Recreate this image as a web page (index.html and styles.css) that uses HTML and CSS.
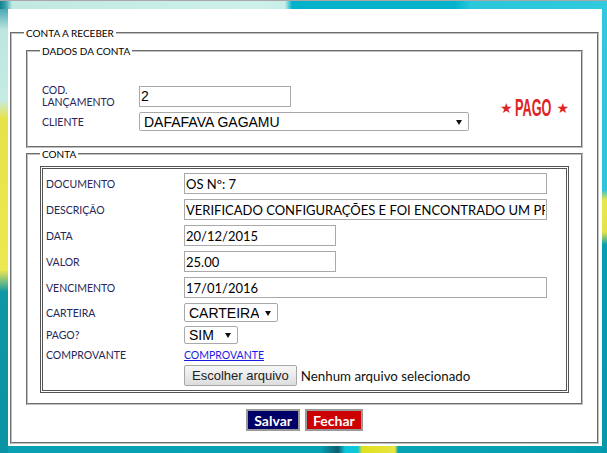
FILE: index.html
```html
<!DOCTYPE html>
<html lang="pt-BR">
<head>
  <meta charset="UTF-8" />
  <title>Conta a Receber</title>
  <link rel="stylesheet" href="styles.css">
</head>
<body>

<div class="panel">
  <fieldset class="box outer">
    <legend>CONTA A RECEBER</legend>

    <fieldset class="box">
      <legend>DADOS DA CONTA</legend>
      <div class="dados">
        <div class="dados-form">
          <div class="drow">
            <label class="lbl dlbl">COD. LANÇAMENTO</label>
            <input type="text" class="cod" value="2" />
          </div>
          <div class="drow drow-2">
            <label class="lbl dlbl">CLIENTE</label>
            <span class="sel">
              <select class="cliente"><option>DAFAFAVA GAGAMU</option></select>
            </span>
          </div>
        </div>
        <div class="stamp">
          <span class="star">★</span>
          <span class="pago"><span>PAGO</span></span>
          <span class="star">★</span>
        </div>
      </div>
    </fieldset>

    <fieldset class="box">
      <legend>CONTA</legend>
      <div class="tbl">
        <div class="tbl-inner">
          <div class="row">
            <label class="lbl">DOCUMENTO</label>
            <input type="text" class="txt full" value="OS Nº: 7" />
          </div>
          <div class="row">
            <label class="lbl">DESCRIÇÃO</label>
            <input type="text" class="txt full" value="VERIFICADO CONFIGURAÇÕES E FOI ENCONTRADO UM PROBLEMA" />
          </div>
          <div class="row">
            <label class="lbl">DATA</label>
            <input type="text" class="txt short" value="20/12/2015" />
          </div>
          <div class="row">
            <label class="lbl">VALOR</label>
            <input type="text" class="txt short" value="25.00" />
          </div>
          <div class="row">
            <label class="lbl">VENCIMENTO</label>
            <input type="text" class="txt full" value="17/01/2016" />
          </div>
          <div class="row row-cart">
            <label class="lbl">CARTEIRA</label>
            <span class="sel">
              <select class="carteira"><option>CARTEIRA</option></select>
            </span>
          </div>
          <div class="row">
            <label class="lbl">PAGO?</label>
            <span class="sel">
              <select class="pago-sel"><option>SIM</option><option>NÃO</option></select>
            </span>
          </div>
          <div class="row row-link">
            <label class="lbl">COMPROVANTE</label>
            <a href="#" class="link">COMPROVANTE</a>
          </div>
          <div class="row row-file">
            <label class="lbl"></label>
            <button type="button" class="file-btn">Escolher arquivo</button>
            <span class="file-name">Nenhum arquivo selecionado</span>
          </div>
        </div>
      </div>
    </fieldset>

    <div class="actions">
      <button type="button" class="btn salvar">Salvar</button>
      <button type="button" class="btn fechar">Fechar</button>
    </div>
  </fieldset>
</div>

</body>
</html>
```

FILE: styles.css
```css
* { box-sizing: border-box; }
html, body { height: 100%; }
html {
  background-color: #079cae;
  background-repeat: no-repeat;
  background-image:
    linear-gradient(#a8a8a8, #a8a8a8),
    linear-gradient(to right, #13808f 0, #3aa4b0 6px, #c2e8e2 12px, #cdf0ea 260px, #c8ece6 285px, #02b2ca 292px, #03b3cb 455px, #2ac6da 470px, #2fcadd 100%),
    linear-gradient(to bottom, #1a90a0 0, #bde6e0 30px, #c6ebe5 100px, #e6e34a 118px, #ebe851 270px, #0f97a6 292px, #0993a4 100%),
    linear-gradient(to bottom, #30cadd 0, #2ac6da 190px, #e9e84a 200px, #e6e445 232px, #02a0b4 245px, #0399ab 100%),
    linear-gradient(to right, #08a0b2 0, #05a2b4 320px, #0e5d6d 338px, #0ac6dc 345px, #10c8d8 358px, #dfe020 362px, #e7e540 395px, #06a3b5 398px, #049db0 100%);
  background-size: 100% 1px, 100% 9px, 8px 100%, 5px 100%, 100% 8px;
  background-position: 0 0, 0 0, 0 0, right top, left bottom;
}
body {
  margin: 0;
  padding-top: 9px;
  font-family: Lato, "Open Sans", sans-serif;
  color: #000;
}
.panel {
  margin-left: 8px;
  width: 594px;
  background: #fff;
  padding: 18px 3px 2px 2px;
}
.box {
  margin: 0 2px;
  min-width: 0;
  padding: 6px 12px 10px;
  border: 2px groove #c0c0c0;
}
.box.outer {
  margin: 0;
  padding-bottom: 11px;
}
.box legend {
  font-size: 10px;
  line-height: 12px;
  padding: 0 2px;
  color: #000;
}
.lbl {
  font-size: 10.5px;
  line-height: 12px;
  color: #262659;
  flex: none;
}

/* dados da conta */
.dados {
  display: flex;
  align-items: center;
  justify-content: space-between;
  margin-top: 21px;
  margin-bottom: 5px;
}
.drow {
  display: flex;
  align-items: center;
}
.drow-2 { margin-top: 4px; }
.dlbl {
  width: 99px;
  padding: 0 20px 0 2px;
}
.cod {
  width: 152px;
  height: 21px;
  border: 1px solid #a9a9a9;
  padding: 0 1px;
  font-family: "Liberation Sans", Arial, sans-serif;
  font-size: 14px;
  margin: 0;
}
.stamp {
  display: flex;
  align-items: center;
  color: #dd2525;
}
.star {
  font-family: "DejaVu Sans", sans-serif;
  font-size: 14px;
  line-height: 14px;
}
.pago {
  width: 38px;
  margin: 0 3px 0 3px;
  height: 22px;
  white-space: nowrap;
}
.pago span {
  display: inline-block;
  font-family: "Liberation Sans", Arial, sans-serif;
  font-weight: bold;
  font-size: 24px;
  line-height: 22px;
  transform: scaleX(0.53);
  transform-origin: left center;
}

/* selects */
.sel {
  position: relative;
  display: inline-block;
}
.sel select {
  appearance: none;
  -webkit-appearance: none;
  display: block;
  margin: 0;
  background: #fff;
  border: 1px solid #a9a9a9;
  border-radius: 2px;
  font-family: "Liberation Sans", Arial, sans-serif;
  font-size: 14px;
  color: #000;
  padding: 0 18px 0 4px;
}
.sel::after {
  content: "";
  position: absolute;
  right: 7px;
  top: 50%;
  margin-top: -2px;
  border-left: 3px solid transparent;
  border-right: 3px solid transparent;
  border-top: 5px solid #111;
  pointer-events: none;
}
.cliente { width: 330px; height: 19px; }
.carteira { width: 94px; height: 19px; }
.pago-sel { width: 54px; height: 18px; }

/* conta */
.tbl {
  border: 1px solid #555;
  padding: 1px;
}
.tbl-inner {
  border: 1px solid #555;
  padding: 4px 0 4px 3px;
}
.row {
  display: flex;
  align-items: center;
  margin-bottom: 5px;
}
.row .lbl { width: 138px; }
.row-cart { margin-bottom: 4px; }
.row-link { margin-bottom: 4px; height: 12px; }
.row-file { margin-bottom: 0; }
.txt {
  height: 21px;
  margin: 0;
  border: 1px solid #a9a9a9;
  padding: 0 1px;
  font-family: Lato, sans-serif;
  font-size: 13px;
  color: #000;
}
.txt.full { width: 363px; }
.txt.short { width: 152px; }
.link {
  font-size: 10.5px;
  line-height: 12px;
  color: #1a1ae6;
}
.file-btn {
  height: 21px;
  margin: 0;
  padding: 0 7px;
  border: 1px solid #a6a6a6;
  border-radius: 2px;
  background: linear-gradient(#f7f7f7, #dddddd);
  font-family: "Liberation Sans", Arial, sans-serif;
  font-size: 13px;
  color: #222;
}
.file-name {
  margin-left: 4px;
  font-size: 13.3px;
  color: #111;
}

/* botoes */
.actions {
  display: flex;
  justify-content: center;
  gap: 5px;
  margin-top: 4px;
}
.btn {
  height: 22px;
  margin: 0;
  padding: 0 6px;
  border: 2px solid #9a9a9a;
  font-family: Lato, sans-serif;
  font-weight: bold;
  font-size: 14px;
  color: #fff;
  cursor: pointer;
}
.salvar { background: #000066; }
.fechar { background: #cc0000; }
```
